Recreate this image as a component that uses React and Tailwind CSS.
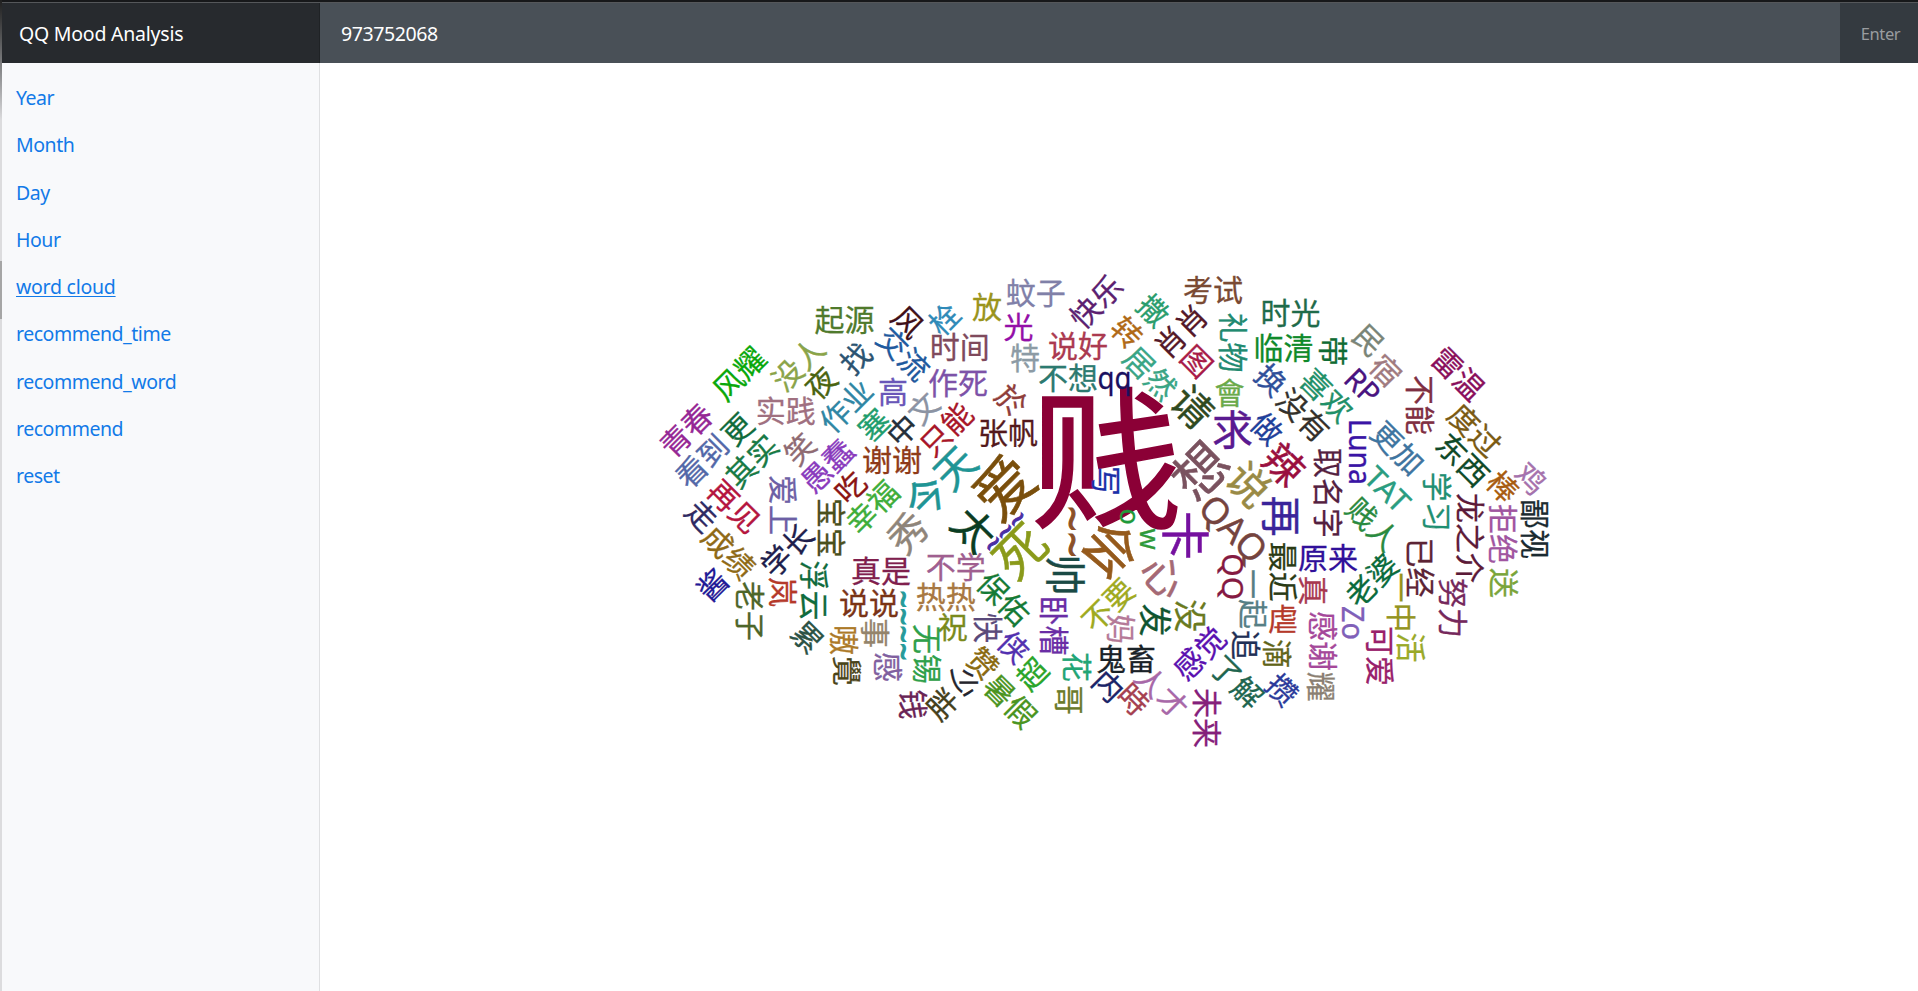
const LINKS = ['Year', 'Month', 'Day', 'Hour', 'word cloud', 'recommend_time', 'recommend_word', 'recommend', 'reset'];

// [text, centre x, centre y, rotation, colour, font size, text length]
const WORDS = [
  ['贱', 1107, 461, 0, '#8b0036', 153],
  ['青春', 687, 431, -45, '#952795'],
  ['风耀', 740, 374.5, -45, '#0aa80a'],
  ['没人', 799, 365, -45, '#8aa44a'],
  ['起源', 845.5, 321, 0, '#4f7a2c'],
  ['找', 856.7, 359, -45, '#2c5472'],
  ['夜', 821.7, 384, -45, '#4a6410'],
  ['实践', 786.7, 412, 0, '#a07080'],
  ['更', 738, 430, -45, '#0f6b3c'],
  ['作业', 846.7, 406.7, -45, '#2f86a4'],
  ['其实', 752.8, 461.7, -45, '#187a45'],
  ['笑', 800.5, 450, -45, '#8f6b73'],
  ['愚蠢', 828, 466.7, -45, '#8a3bbd'],
  ['看到', 703, 462, -45, '#5368a8'],
  ['再见', 733.5, 507, 45, '#b5163f'],
  ['走', 700.8, 516.7, 45, '#2f2a63'],
  ['成绩', 728, 553, 45, '#8f6a17'],
  ['学长', 788, 551, -45, '#1f1f4d'],
  ['酱', 713, 585.7, -45, '#1f1896'],
  ['老子', 749, 611, 90, '#4d6629'],
  ['岚', 782, 592, 90, '#b5392a'],
  ['浮云', 813.7, 590.5, 90, '#0f6b3c'],
  ['宝宝', 830, 528, 90, '#4a4f1c'],
  ['爱上', 782.7, 505, 90, '#6d5fa5'],
  ['吃', 851, 488, -45, '#8b1414'],
  ['幸福', 873, 508, -45, '#3fae3a'],
  ['累', 806.7, 638, 45, '#2b5245'],
  ['嗷', 843, 640, 90, '#ad7a28'],
  ['覺', 846, 671, 90, '#4a4418'],
  ['事', 874, 633, 90, '#94846b'],
  ['说说', 870, 604, 0, '#7a3416'],
  ['真是', 882, 572, 0, '#80204d'],
  ['感', 887, 667, 90, '#80609f'],
  ['谢谢', 893, 461, 0, '#8f3a17'],
  ['塞', 874.5, 425.5, -45, '#1f9e6d'],
  ['中', 903, 431, -45, '#25303a'],
  ['文', 924, 409, -45, '#8b93a3'],
  ['高', 894, 392.5, 0, '#6a57b8'],
  ['交流', 902.7, 354.5, 45, '#1f5a9e'],
  ['风', 907, 322.5, 45, '#401018'],
  ['栓', 945, 320, -45, '#2f8ab8'],
  ['放', 988, 308, 0, '#9a941c'],
  ['蚊子', 1036.7, 293.5, 0, '#8080a8'],
  ['光', 1019.5, 328, 0, '#940fa8'],
  ['时间', 960.7, 348, 0, '#7f4a5c'],
  ['特', 1026, 359, 0, '#8c9ba5'],
  ['说好', 1079, 347, 0, '#ab3a50'],
  ['不想', 1069, 379, 0, '#2c7a70'],
  ['作死', 959, 383.5, 0, '#7d52a8'],
  ['於', 1010.5, 401, 45, '#8f3d3a'],
  ['只能', 947, 430, -45, '#a81528'],
  ['张帆', 1009, 434, 0, '#54191c'],
  ['今天', 941, 483, -45, '#1f9595', 41],
  ['爱', 1005, 488, -45, '#7a4f0c', 60],
  ['秀', 908.5, 533.5, -45, '#8f857a', 39],
  ['太', 973.5, 530, 45, '#0a3d22', 42],
  ['死', 1021, 552, -45, '#8a9a1a', 51],
  ['不学', 956.7, 568, 0, '#a05f90'],
  ['热热', 946.7, 598, 0, '#a87842'],
  ['保佑', 1003, 599.5, 45, '#157a35'],
  ['帅', 1064, 575, 90, '#1a4a45', 41],
  ['~~', 1072, 531.7, 90, '#8b5028', 42, 52],
  ['~~~', 1005.5, 531.5, -45, '#4b2fa5', 32, 52],
  ['~~~~', 902.5, 625.5, 90, '#259a9a', 34, 70],
  ['祝', 953.7, 628, 0, '#7a8a1c'],
  ['快', 987.5, 628, 90, '#5a4a7a'],
  ['侠', 1013, 647.5, 45, '#5230b0'],
  ['卧槽', 1053, 625.5, 90, '#6a2da5'],
  ['无锡', 926, 654, 90, '#2fa04a'],
  ['赞', 982, 664, 45, '#8a6a10'],
  ['超', 1033, 674.7, -45, '#2aa52a'],
  ['花', 1076, 667, 90, '#22a575'],
  ['哥', 1068, 700, 90, '#6a7a2a'],
  ['暑假', 1009.5, 702, 45, '#4a9420'],
  ['少', 963, 683, 90, '#25252d'],
  ['胖', 943, 704.7, -45, '#45401c'],
  ['钱', 912, 704.5, 90, '#6a2455'],
  ['快乐', 1097, 302.5, -45, '#5c1f70'],
  ['考试', 1214, 290.5, 0, '#7a4a33'],
  ['撒', 1152.5, 311, 45, '#2a9d6d'],
  ['肖肖', 1181.7, 332, -45, '#541828'],
  ['转', 1126, 333, 45, '#b06a18'],
  ['图', 1196, 362, 45, '#a81a48'],
  ['居然', 1149.5, 374, 45, '#3aa585'],
  ['礼物', 1232, 342.5, 90, '#218a70'],
  ['时光', 1291.5, 313.5, 0, '#1f6b4a'],
  ['临清', 1284.5, 349, 0, '#0f8a2a'],
  ['會', 1230.5, 394, 0, '#6aaa4a'],
  ['qq', 1115.5, 379, 0, '#1a1060', 30, 34],
  ['请', 1191.7, 407.5, 45, '#2f4a20', 40],
  ['换', 1270, 380.5, 45, '#2f4f9a'],
  ['做', 1266, 429, 45, '#1f3f9a'],
  ['求', 1233.5, 431, 0, '#5a1a90', 41],
  ['没有', 1302.5, 416, 45, '#33302a'],
  ['喜欢', 1326, 396, 45, '#1f9068'],
  ['带', 1332, 351, 90, '#0f6b33'],
  ['民', 1368, 341, 45, '#7a8578'],
  ['宿', 1385, 371, 45, '#a07a80'],
  ['RP', 1362, 386.5, 45, '#4a1480', 30, 36],
  ['不能', 1419, 405, 90, '#7f2f42'],
  ['雷温', 1457.5, 374.5, 45, '#8a0f5c'],
  ['度过', 1474, 431, 45, '#7a5a12'],
  ['Luna', 1359, 452, 90, '#3a14a5', 30, 66],
  ['更加', 1397, 449, 45, '#3f75a0'],
  ['东西', 1462, 460.5, 45, '#0f4a28'],
  ['取名字', 1327.5, 493, 90, '#54203f'],
  ['TAT', 1387, 490, 45, '#2a9d80', 30, 50],
  ['贱人', 1372, 525, 45, '#2a8a3f'],
  ['学习', 1436, 501.7, 90, '#1f8f72'],
  ['龙之介', 1469.5, 538, 90, '#5c1a38'],
  ['棒', 1502, 487.5, 45, '#a85c10'],
  ['鸡', 1530, 479, 45, '#a572ad'],
  ['鄙视', 1534.5, 529, 90, '#1a2a30'],
  ['拒绝', 1502.5, 534, 90, '#a055a0'],
  ['送', 1503.5, 583, 90, '#7aa53a'],
  ['已经', 1419, 567.5, 90, '#5c2435'],
  ['原来', 1329, 558.5, 0, '#30109a'],
  ['真', 1312.5, 590.5, 90, '#a8384f'],
  ['老婆', 1372.5, 581, -45, '#0a6b3c'],
  ['一中', 1400, 602.5, 90, '#94941f'],
  ['活', 1410.5, 647.5, 90, '#9aaa28'],
  ['努力', 1452.5, 608, 90, '#75285c'],
  ['感谢', 1322.5, 641, 90, '#a5489a'],
  ['耀', 1320, 686.7, 90, '#8a7f72'],
  ['Zo', 1352, 623, 90, '#8060b8', 30, 34],
  ['可爱', 1379.5, 656, 90, '#98206a'],
  ['卡', 1184, 535.5, 90, '#75109f', 49],
  ['会', 1110.5, 549, 45, '#955a1c', 54],
  ['写', 1105, 481, 90, '#1a2fa8'],
  ['想', 1201, 471, -45, '#7a525f', 54],
  ['说', 1248, 485, 45, '#998a45', 42],
  ['辣', 1283, 465, 45, '#9a0f40', 40],
  ['再', 1280, 516, 90, '#3a249a', 41],
  ['心', 1162.5, 577, 45, '#a56a75', 42],
  ['QAQ', 1233, 529, 45, '#75443f', 36, 79],
  ['QQ', 1232, 576.7, 90, '#851a42', 29, 47],
  ['最近', 1282, 571.7, 90, '#2a3a14'],
  ['一起', 1252.5, 599, 90, '#567f85'],
  ['虐', 1284, 619.5, 0, '#b5392a'],
  ['追', 1245, 645, 90, '#1f2f55'],
  ['滴', 1276, 654, 90, '#5f6418'],
  ['发', 1154, 620, 90, '#0f5530', 33],
  ['没', 1189.5, 615.7, 90, '#6a7a1f', 33],
  ['感觉', 1200.5, 654, -45, '#5a10b0'],
  ['了解', 1236, 682.5, 45, '#20654f'],
  ['攒', 1281, 690.5, 45, '#2a3a9a'],
  ['未来', 1206, 718, 90, '#85207a'],
  ['人才', 1161, 693, 45, '#a868a8'],
  ['時', 1132.5, 700, 45, '#a54050'],
  ['内', 1107.5, 686.5, 45, '#1a2468'],
  ['鬼畜', 1127, 659.5, 0, '#1a2228'],
  ['妈', 1120.5, 629, 90, '#b57a98'],
  ['不要', 1109, 606, -45, '#a0aa1f'],
  ['o', 1129, 516.7, 90, '#1f9a3a', 27],
  ['w', 1149, 539, 90, '#2f9a3a', 27],
];

function WordCloud() {
  return (
    <svg viewBox="320 63 1598 928" className="block h-full w-full">
      {WORDS.map(([text, x, y, angle, color, size = 30, length], i) => (
        <text
          key={i}
          transform={`translate(${angle === 0 ? x - 1 : x} ${y}) rotate(${angle})`}
          y={size * 0.375 - 1}
          fontSize={size}
          fill={color}
          stroke={color}
          strokeWidth={text[0] === '~' ? 1 : size * 0.01}
          textAnchor="middle"
          textLength={length}
          lengthAdjust="spacingAndGlyphs"
          className="font-['Noto_Sans','Noto_Sans_CJK_SC',sans-serif]"
        >
          {text}
        </text>
      ))}
    </svg>
  );
}

export default function App() {
  return (
    <div className="flex h-[991px] w-[1918px] overflow-hidden bg-white font-['Noto_Sans','Open_Sans',sans-serif]">
      <div className="flex w-[2px] shrink-0 flex-col bg-[#dcdcde]">
        <div className="h-[120px] bg-linear-to-b from-[#202020] via-[#77787a] to-[#dcdcde]" />
        <div className="mt-[141px] h-[58px] bg-[#a6a6a6]" />
      </div>
      <div className="flex min-w-0 grow flex-col">
        <div className="h-[3px] shrink-0 border-b border-[#55575a] bg-[#17181a]" />
        <header className="flex h-[60px] shrink-0 bg-[#343a40] pt-[2px] text-white">
          <div className="-mt-[2px] flex w-[318px] items-center bg-[#272a2e] pt-[2px] pl-[17px] text-[19.5px] tracking-[-0.23px] shadow-[inset_-1px_0_0_#1f2225]">
            QQ Mood Analysis
          </div>
          <div className="-mt-[2px] flex grow items-center bg-[#495057] pt-[2px] pl-[21px] text-[19.5px] tracking-[-0.4px]">
            973752068
          </div>
          <button className="w-[78px] pl-[3px] text-[16.5px] tracking-[-0.4px] text-[#999c9f]">Enter</button>
        </header>
        <div className="flex min-h-0 grow">
          <nav className="flex w-[318px] shrink-0 flex-col border-r border-[#dfe0e2] bg-[#f8f9fb] pt-[11px] pl-[14px] text-[19.5px] tracking-[-0.47px] text-[#127ae8]">
            {LINKS.map((label) => (
              <a
                key={label}
                className={`flex h-[47.25px] items-center ${label === 'word cloud' ? 'tracking-[-0.25px] underline decoration-1 underline-offset-2' : ''}`}
              >
                {label}
              </a>
            ))}
          </nav>
          <main className="min-w-0 grow">
            <WordCloud />
          </main>
        </div>
      </div>
    </div>
  );
}
